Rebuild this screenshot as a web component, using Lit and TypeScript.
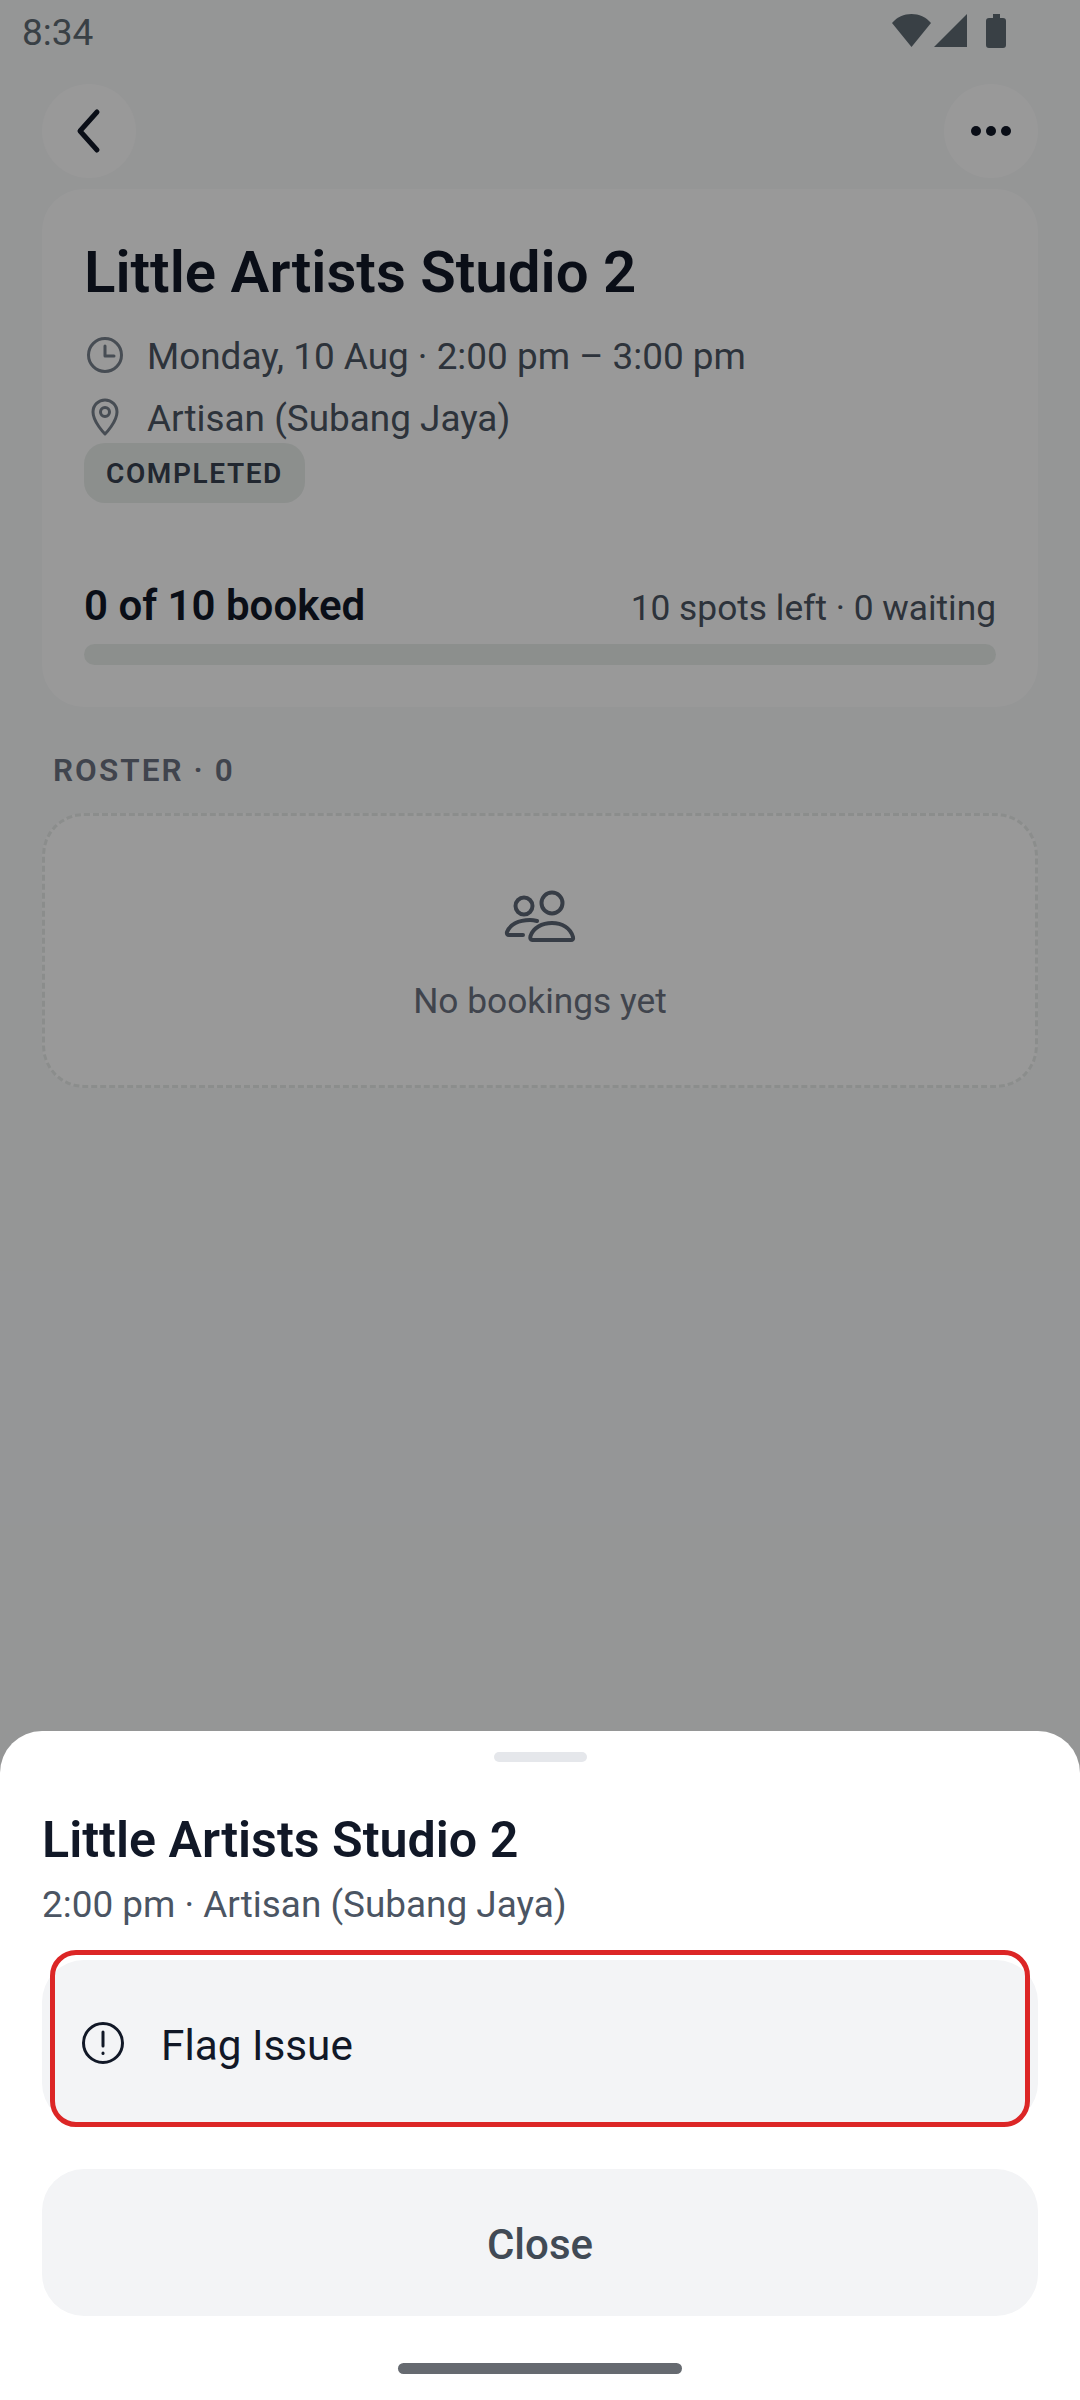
import { LitElement, html, css } from 'lit';
import { customElement } from 'lit/decorators.js';

@customElement('app-root')
export class AppRoot extends LitElement {
  static styles = css`
    :host {
      display: block;
      position: relative;
      width: 1080px;
      height: 2400px;
      overflow: hidden;
      background: #f9fafb;
      font-family: Roboto, "Liberation Sans", sans-serif;
      color: #111827;
    }
    svg { display: block; flex: none; }

    /* status bar */
    .status {
      height: 84px;
      display: flex;
      justify-content: space-between;
      padding: 13px 74px 0 22px;
      box-sizing: border-box;
    }
    .time { font-size: 37px; line-height: 40px; color: #5f6b73; }
    .status-icons { display: flex; height: 36px; }

    /* header */
    .topbar {
      display: flex;
      justify-content: space-between;
      padding: 0 42px;
    }
    .round {
      width: 94px;
      height: 94px;
      border-radius: 50%;
      background: #fff;
      display: flex;
      align-items: center;
      justify-content: center;
    }

    /* summary card */
    .card {
      margin: 11px 42px 0;
      padding: 48px 42px 42px;
      background: #fff;
      border-radius: 42px;
    }
    .card h1 {
      margin: 0;
      font-size: 58.2px;
      line-height: 70px;
      font-weight: 600;
    }
    .meta {
      display: flex;
      align-items: center;
      height: 50px;
      font-size: 36.9px;
      color: #4b5563;
    }
    .meta.first { margin-top: 23px; }
    .meta + .meta { margin-top: 12px; }
    .meta span { margin-top: 3px; }
    .meta-icon { width: 63px; }
    .badge {
      width: fit-content;
      margin-top: 1px;
      padding: 0 22px;
      height: 60px;
      line-height: 62px;
      border-radius: 21px;
      background: #eaefec;
      font-size: 28px;
      font-weight: 600;
      letter-spacing: 1.6px;
      color: #374151;
    }
    .booked {
      margin-top: 78px;
      height: 50px;
      display: flex;
      justify-content: space-between;
      align-items: baseline;
      line-height: 50px;
    }
    .booked b { font-size: 42px; font-weight: 600; }
    .booked span { font-size: 35.3px; color: #4b5563; }
    .track {
      margin-top: 13px;
      height: 21px;
      border-radius: 11px;
      background: #eaefec;
    }

    /* roster */
    .section {
      margin: 46px 53px 0;
      line-height: 36px;
      font-size: 31.5px;
      font-weight: 600;
      letter-spacing: 2.1px;
      color: #6b7280;
    }
    .empty {
      margin: 24px 42px 0;
      height: 275px;
      box-sizing: border-box;
      border: 3px dashed #e8ecea;
      border-radius: 42px;
      background: #fff;
      display: flex;
      flex-direction: column;
      align-items: center;
      padding-top: 74px;
    }
    .empty p {
      margin: 34px 0 0;
      font-size: 35.3px;
      line-height: 46px;
      color: #6b7280;
    }

    .scrim {
      position: absolute;
      inset: 0;
      background: rgba(0, 0, 0, 0.4);
    }

    /* bottom sheet */
    .sheet {
      position: absolute;
      left: 0;
      right: 0;
      bottom: 0;
      height: 669px;
      box-sizing: border-box;
      padding: 21px 42px 0;
      background: #fff;
      border-radius: 42px 42px 0 0;
    }
    .grabber {
      width: 93px;
      height: 10px;
      margin: 0 auto;
      border-radius: 5px;
      background: #e5e7eb;
    }
    .sheet h2 {
      margin: 48px 0 0;
      font-size: 50.2px;
      line-height: 60px;
      font-weight: 600;
    }
    .sub {
      margin-top: 10px;
      font-size: 36.9px;
      line-height: 50px;
      color: #4b5563;
    }
    .action {
      position: relative;
      margin-top: 30px;
      height: 165px;
      border-radius: 42px;
      background: #f3f4f6;
      display: flex;
      align-items: center;
      gap: 36px;
      padding-left: 39px;
      font-size: 42.3px;
      font-weight: 450;
    }
    .action span { margin-top: 6px; }
    .outline {
      position: absolute;
      left: 8px;
      right: 8px;
      top: -10px;
      bottom: -2px;
      border: 5px solid #dc2626;
      border-radius: 26px;
    }
    .close {
      margin-top: 44px;
      height: 147px;
      box-sizing: border-box;
      padding-top: 3px;
      border-radius: 42px;
      background: #f3f4f6;
      display: flex;
      align-items: center;
      justify-content: center;
      font-size: 42px;
      font-weight: 500;
      color: #414a55;
    }
    .home {
      width: 284px;
      height: 11px;
      margin: 47px auto 0;
      border-radius: 6px;
      background: #666a70;
    }
  `;

  render() {
    return html`
      <div class="status">
        <div class="time">8:34</div>
        <div class="status-icons">
          <svg width="114" height="36" viewBox="892 13 114 36" fill="#5f6b73">
            <path d="M892 23C897 17 904 14 911.500 14C919 14 926 17 931 23L911.500 47Z" />
            <path d="M967 14V47H934Z" />
            <path d="M993 14H1000V18H1003C1005 18 1006 19 1006 21V45C1006 47 1005 48 1003 48H989C987 48 986 47 986 45V21C986 19 987 18 989 18H993Z" />
          </svg>
        </div>
      </div>

      <div class="topbar">
        <div class="round">
          <svg width="30" height="46" viewBox="0 0 30 46" fill="none" stroke="#111827" stroke-width="5" stroke-linecap="round" stroke-linejoin="round">
            <path d="M23 4L6 23L23 42" />
          </svg>
        </div>
        <div class="round">
          <svg width="44" height="12" viewBox="0 0 44 12" fill="#111827">
            <circle cx="7" cy="6" r="5" />
            <circle cx="22" cy="6" r="5" />
            <circle cx="37" cy="6" r="5" />
          </svg>
        </div>
      </div>

      <section class="card">
        <h1>Little Artists Studio 2</h1>
        <div class="meta first">
          <div class="meta-icon">
            <svg width="44" height="44" viewBox="0 0 44 44" fill="none" stroke="#77808c" stroke-width="3" stroke-linecap="round" stroke-linejoin="round">
              <circle cx="21" cy="22" r="16.500" />
              <path d="M21 13V23H30" />
            </svg>
          </div>
          <span>Monday, 10 Aug · 2:00 pm – 3:00 pm</span>
        </div>
        <div class="meta">
          <div class="meta-icon">
            <svg width="44" height="44" viewBox="0 0 44 44" fill="none" stroke="#77808c" stroke-width="3" stroke-linejoin="round">
              <path d="M21 39C21 39 9 27 9 17C9 10 14.500 5 21 5C27.500 5 33 10 33 17C33 27 21 39 21 39Z" />
              <circle cx="21" cy="17" r="4.500" />
            </svg>
          </div>
          <span>Artisan (Subang Jaya)</span>
        </div>
        <div class="badge">COMPLETED</div>
        <div class="booked">
          <b>0 of 10 booked</b>
          <span>10 spots left · 0 waiting</span>
        </div>
        <div class="track"></div>
      </section>

      <div class="section">ROSTER · 0</div>
      <div class="empty">
        <svg width="72" height="54" viewBox="0 0 72 54" fill="none" stroke="#5d6675" stroke-width="4" stroke-linecap="round" stroke-linejoin="round">
          <circle cx="48" cy="13" r="10.500" />
          <circle cx="20" cy="16" r="8.500" />
          <path d="M28 50H67C68.500 50 69.500 49 69 47C66.500 38 58 33 48 33C38 33 29 38 26.500 46C26 48.500 26.500 50 28 50Z" />
          <path d="M33 31C31 30.500 29 30 26 30C14 30 6 35 3 42C2.500 44 3.500 45 5 45H19" />
        </svg>
        <p>No bookings yet</p>
      </div>

      <div class="scrim"></div>

      <div class="sheet">
        <div class="grabber"></div>
        <h2>Little Artists Studio 2</h2>
        <div class="sub">2:00 pm · Artisan (Subang Jaya)</div>
        <div class="action">
          <svg width="44" height="44" viewBox="0 0 44 44" fill="none" stroke="#111827" stroke-width="3" stroke-linecap="round">
            <circle cx="22" cy="22" r="19.500" />
            <path d="M22 11V25" />
            <path d="M22 32V32.500" />
          </svg>
          <span>Flag Issue</span>
          <div class="outline"></div>
        </div>
        <div class="close">Close</div>
        <div class="home"></div>
      </div>
    `;
  }
}
